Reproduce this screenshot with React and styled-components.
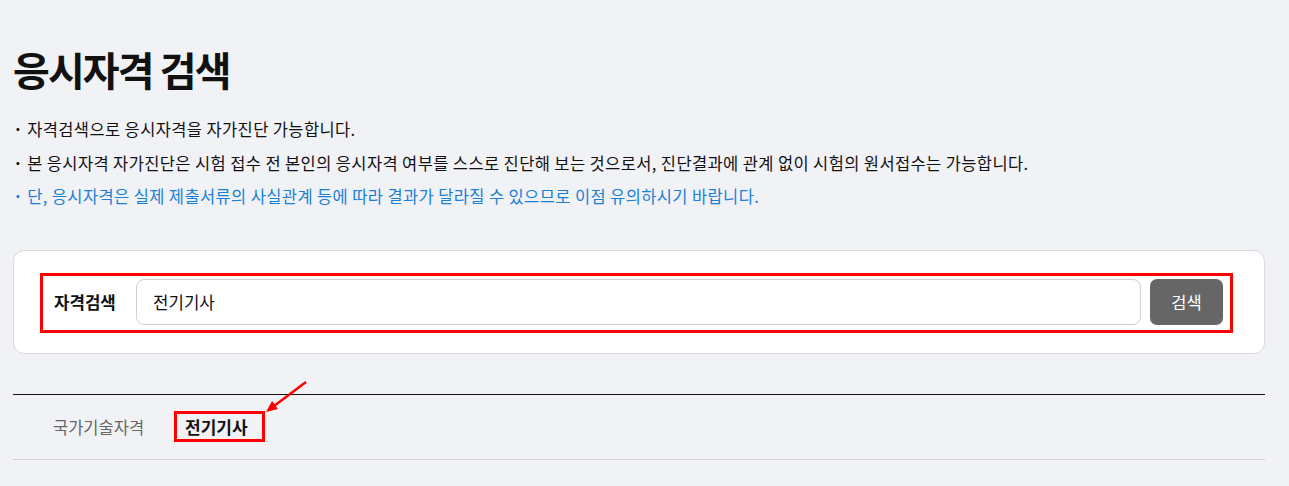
import React from "react";
import styled, { createGlobalStyle } from "styled-components";

const GlobalStyle = createGlobalStyle`
  html, body {
    margin: 0;
    padding: 0;
    background: #f1f2f6;
    font-family: "Noto Sans CJK KR", "Noto Sans", sans-serif;
    color: #111;
  }
`;

const Page = styled.div`
  position: relative;
  width: 1289px;
  height: 486px;
  padding: 0 24px 0 13px;
  box-sizing: border-box;
  overflow: hidden;
`;

const Title = styled.h1`
  margin: 0;
  padding-top: 40px;
  font-size: 40px;
  font-weight: 700;
  letter-spacing: -1.9px;
  line-height: 58px;
`;

const Notes = styled.ul`
  list-style: none;
  margin: 15px 0 0;
  padding: 0;
`;

const Note = styled.li`
  display: flex;
  gap: 4px;
  font-size: 16.5px;
  line-height: 33.5px;
  letter-spacing: 0.38px;
  color: ${(p) => (p.$blue ? "#1a7fd6" : "#111")};

  &::before {
    content: "·";
    font-weight: 700;
  }
`;

const Card = styled.section`
  margin-top: 36px;
  background: #fff;
  border: 1px solid #d9d9de;
  border-radius: 11px;
  padding: 22px 31px 20px 26px;
`;

const Highlight = styled.div`
  display: flex;
  align-items: center;
  gap: 9px;
  border: 3px solid #ff0000;
  padding: 3px 7px 5px 11px;
`;

const Label = styled.label`
  width: 73px;
  font-size: 16.8px;
  font-weight: 700;
`;

const Input = styled.div`
  flex: 1;
  height: 46px;
  box-sizing: border-box;
  border: 1px solid #cfcfd4;
  border-radius: 8px;
  display: flex;
  align-items: center;
  padding-left: 16px;
  font-size: 16.8px;
`;

const SearchButton = styled.button`
  width: 73px;
  height: 46px;
  border: 0;
  border-radius: 7px;
  background: #666;
  color: #fff;
  font-family: inherit;
  font-size: 16.5px;
`;

const Tabs = styled.nav`
  margin-top: 40px;
  border-top: 1px solid #111;
  border-bottom: 1px solid #d0d0d4;
  display: flex;
  align-items: center;
  height: 64px;
  padding-left: 40px;
  gap: 30px;
`;

const Tab = styled.span`
  font-size: ${(p) => (p.$active ? "17px" : "16.5px")};
  color: ${(p) => (p.$active ? "#111" : "#666")};
  font-weight: ${(p) => (p.$active ? 700 : 400)};
  ${(p) =>
    p.$active &&
    `
    border: 3px solid #ff0000;
    padding: 0 14px 0 8px;
    line-height: 25px;
  `}
`;

const Arrow = styled.svg`
  position: absolute;
  left: 262px;
  top: 377px;
`;

export default function App() {
  return (
    <Page>
      <GlobalStyle />
      <Title>응시자격 검색</Title>
      <Notes>
        <Note>자격검색으로 응시자격을 자가진단 가능합니다.</Note>
        <Note>
          본 응시자격 자가진단은 시험 접수 전 본인의 응시자격 여부를 스스로 진단해 보는 것으로서, 진단결과에 관계 없이 시험의 원서접수는 가능합니다.
        </Note>
        <Note $blue>
          단, 응시자격은 실제 제출서류의 사실관계 등에 따라 결과가 달라질 수 있으므로 이점 유의하시기 바랍니다.
        </Note>
      </Notes>
      <Card>
        <Highlight>
          <Label>자격검색</Label>
          <Input>전기기사</Input>
          <SearchButton>검색</SearchButton>
        </Highlight>
      </Card>
      <Tabs>
        <Tab>국가기술자격</Tab>
        <Tab $active>전기기사</Tab>
      </Tabs>
      <Arrow width="50" height="40" viewBox="0 0 50 40">
        <line x1="44" y1="5" x2="12" y2="29" stroke="#ff0000" strokeWidth="2.5" />
        <polygon points="4,35 10,24 16,32" fill="#ff0000" />
      </Arrow>
    </Page>
  );
}
